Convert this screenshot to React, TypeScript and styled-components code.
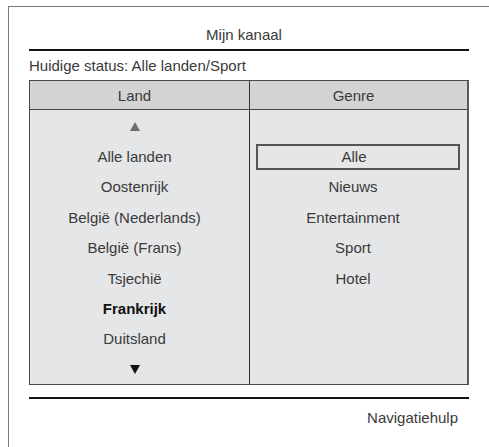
import styled, { createGlobalStyle } from "styled-components";

const GlobalStyle = createGlobalStyle`
  html, body {
    margin: 0;
    padding: 0;
    background: #ffffff;
  }
  body {
    font-family: "Liberation Sans", Arial, sans-serif;
    color: #3a3a3a;
  }
`;

const Frame = styled.div`
  margin: 6px 0 0 8px;
  height: 441px;
  border-top: 1px solid #7a7a7a;
  border-left: 1px solid #7a7a7a;
  box-sizing: border-box;
  padding-left: 20px;
`;

const Sheet = styled.div`
  width: 440px;
  display: flex;
  flex-direction: column;
`;

const Title = styled.div`
  padding: 19px 10px 6px 0;
  line-height: 17px;
  font-size: 15px;
  text-align: center;
  border-bottom: 2px solid #141414;
`;

const Status = styled.div`
  margin-top: 6px;
  line-height: 17px;
  font-size: 15px;
`;

const Table = styled.div`
  margin-top: 6px;
  display: flex;
  border: 1px solid #4a4a4a;
  border-right-width: 2px;
  border-right-color: #5a5a5a;
`;

const Column = styled.div<{ $first?: boolean }>`
  display: flex;
  flex-direction: column;
  width: ${(p) => (p.$first ? "219px" : "auto")};
  flex: ${(p) => (p.$first ? "none" : "1")};
  border-right: ${(p) => (p.$first ? "1px solid #333" : "none")};
`;

const Head = styled.div`
  height: 28px;
  display: flex;
  align-items: center;
  justify-content: center;
  padding-right: 10px;
  font-size: 15px;
  background: #d3d3d4;
  border-bottom: 1px solid #444;
`;

const Body = styled.div`
  height: 274px;
  padding-top: 1px;
  box-sizing: border-box;
  background: #e5e6e8;
  display: grid;
  grid-auto-rows: 30.4px;
  align-content: start;
`;

const Cell = styled.div<{ $bold?: boolean }>`
  display: flex;
  align-items: center;
  justify-content: center;
  padding-right: 10px;
  font-size: 15px;
  font-weight: ${(p) => (p.$bold ? 700 : 400)};
  color: ${(p) => (p.$bold ? "#111" : "#3a3a3a")};
`;

const GenreCell = styled.div`
  display: flex;
  align-items: center;
  justify-content: center;
  font-size: 15px;
`;

const GenreLabel = styled.div<{ $selected?: boolean }>`
  flex: 1;
  height: 26px;
  margin: 0 7px 0 6px;
  box-sizing: border-box;
  display: flex;
  align-items: center;
  justify-content: center;
  padding-right: ${(p) => (p.$selected ? "8px" : "10px")};
  border: 2px solid ${(p) => (p.$selected ? "#555" : "transparent")};
`;

const Footer = styled.div`
  margin-top: 12px;
  border-top: 2px solid #141414;
  padding: 10px 11px 0 0;
  line-height: 17px;
  font-size: 15px;
  text-align: right;
`;

const Arrow = ({ down }: { down?: boolean }) => (
  <svg width="10" height="9" viewBox="0 0 10 9">
    {down ? (
      <polygon points="0,0 10,0 5,9" fill="#111" />
    ) : (
      <polygon points="0,9 10,9 5,0" fill="#6e6e6e" />
    )}
  </svg>
);

const countries = [
  "Alle landen",
  "Oostenrijk",
  "België (Nederlands)",
  "België (Frans)",
  "Tsjechië",
  "Frankrijk",
  "Duitsland",
];

const genres = ["Alle", "Nieuws", "Entertainment", "Sport", "Hotel"];

export default function App() {
  return (
    <>
      <GlobalStyle />
      <Frame>
        <Sheet>
          <Title>Mijn kanaal</Title>
          <Status>Huidige status: Alle landen/Sport</Status>
          <Table>
            <Column $first>
              <Head>Land</Head>
              <Body>
                <Cell>
                  <Arrow />
                </Cell>
                {countries.map((c) => (
                  <Cell key={c} $bold={c === "Frankrijk"}>
                    {c}
                  </Cell>
                ))}
                <Cell>
                  <Arrow down />
                </Cell>
              </Body>
            </Column>
            <Column>
              <Head>Genre</Head>
              <Body>
                <GenreCell />
                {genres.map((g, i) => (
                  <GenreCell key={g}>
                    <GenreLabel $selected={i === 0}>{g}</GenreLabel>
                  </GenreCell>
                ))}
              </Body>
            </Column>
          </Table>
          <Footer>Navigatiehulp</Footer>
        </Sheet>
      </Frame>
    </>
  );
}
